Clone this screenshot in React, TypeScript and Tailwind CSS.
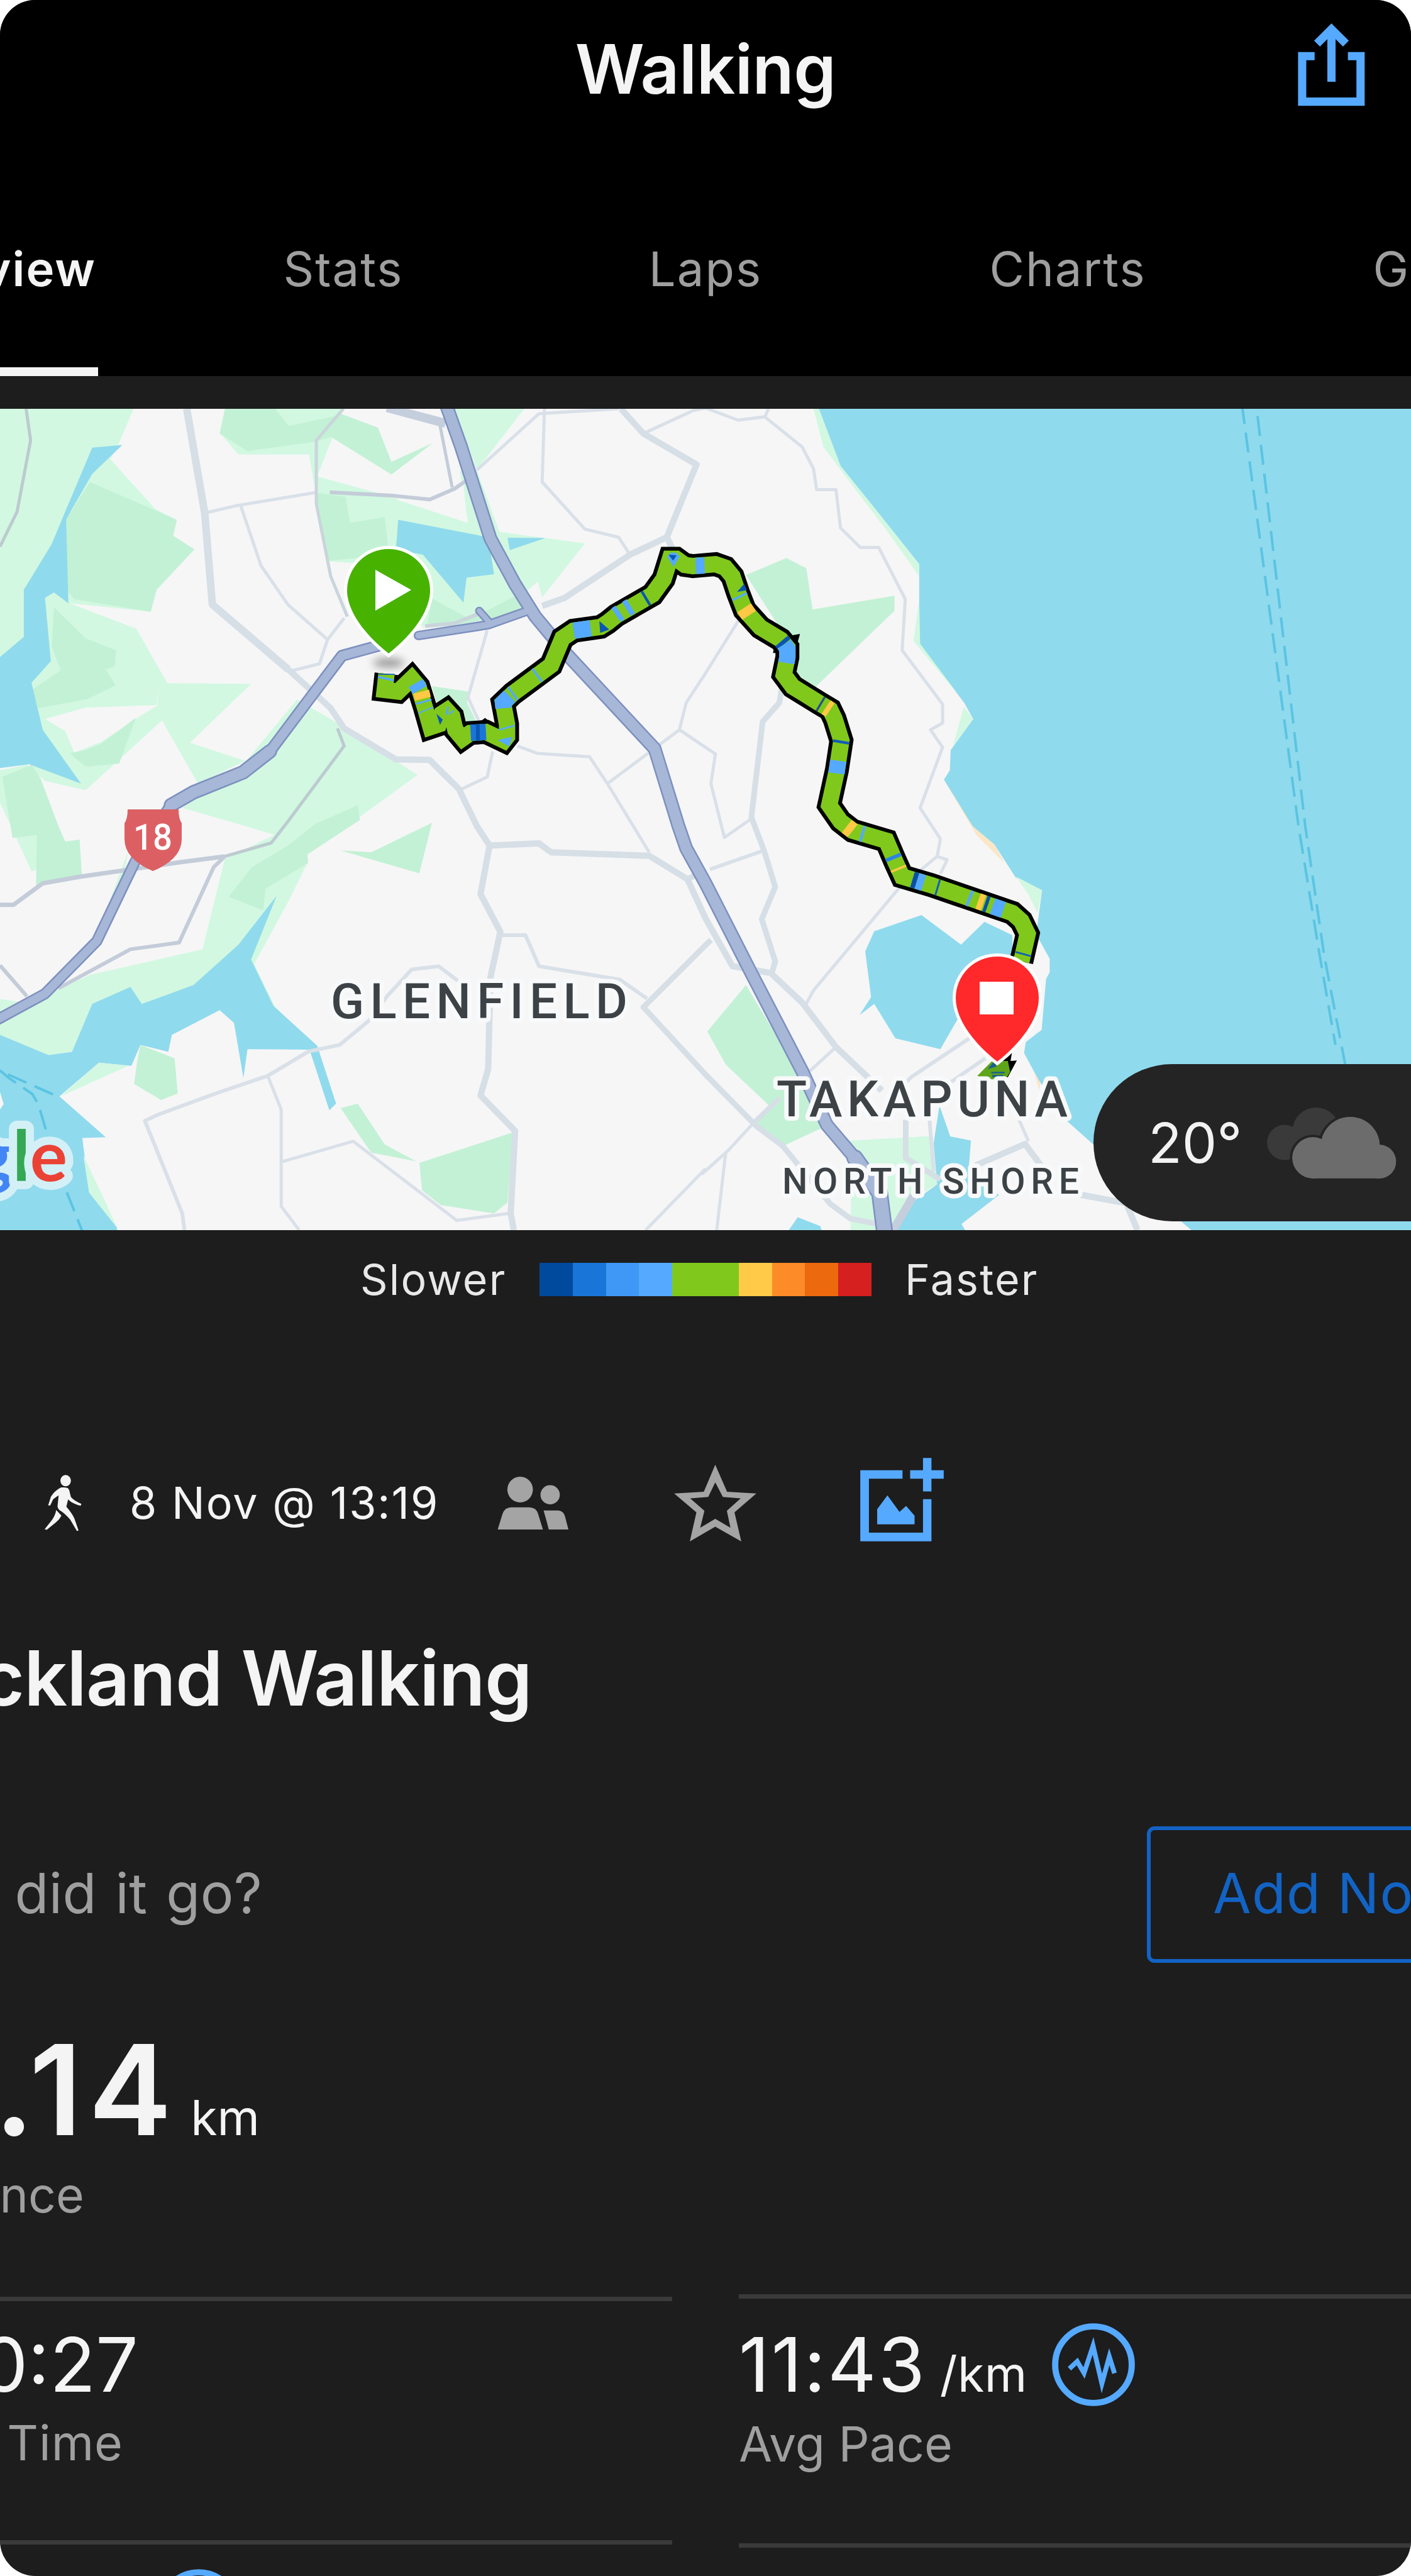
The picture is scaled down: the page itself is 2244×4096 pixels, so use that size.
import { useState } from "react"

interface Shape {
  d: string
  color: string
}

interface Road {
  points: string
  color: string
  width: number
}

const LAND = "#f6f6f7"
const PARK = "#d2f8e1"
const FOREST = "#c3f1d5"
const WATER = "#90daed"
const BEACH = "#fbe6c6"

const tabs = ["Overview", "Stats", "Laps", "Charts", "Gear"]

const paceColors = [
  "bg-[#004a9e]",
  "bg-[#1976d8]",
  "bg-[#3f98f5]",
  "bg-[#55a9ff]",
  "bg-[#80c91c]",
  "bg-[#80c91c]",
  "bg-[#ffca48]",
  "bg-[#fd8b27]",
  "bg-[#ec690e]",
  "bg-[#d61f1f]",
]

const shapes: Shape[] = [
  // parks and reserves
  { color: PARK, d: "0,18 297,18 262,155 245,205 345,390 392,430 385,490 432,540 348,690 335,772 280,762 303,835 210,805 155,740 100,860 0,1000" },
  { color: PARK, d: "100,720 120,700 155,740 210,805 303,835 372,1037 558,1040 422,1258 545,1325 440,1410 360,1175 190,1435 100,1400 60,1340 0,1360 0,1480 70,1735 150,1700 60,1300 60,1035 100,860" },
  { color: LAND, d: "155,740 280,762 303,835" },
  { color: LAND, d: "100,1170 190,1128 348,1118 352,1060 350,1120 303,1168 225,1255 165,1295 145,1215" },
  { color: LAND, d: "100,1400 190,1435 270,1340 290,1500 275,1740 182,1750 177,1618 145,1625 125,1500" },
  { color: FOREST, d: "200,290 393,430 385,490 432,540 348,690 335,772 165,725 147,690 147,430 165,380" },
  { color: FOREST, d: "120,755 190,870 258,915 255,975 235,985 257,1045 195,1095 85,1130 72,1060 135,990 115,900" },
  { color: FOREST, d: "155,1297 190,1285 225,1262 302,1165 265,1335 190,1347" },
  { color: FOREST, d: "5,1385 70,1340 90,1390 130,1568 145,1625 177,1618 182,1750 80,1795 82,1600 28,1612" },
  { color: PARK, d: "490,110 530,188 687,188 698,300 740,120 690,60" },
  { color: FOREST, d: "500,18 615,18 760,38 840,88 870,215 962,145 870,262 735,122 700,140 550,175 488,110" },
  { color: PARK, d: "612,18 768,18 745,45 642,82" },
  { color: PARK, d: "703,268 870,345 1040,442 1022,250 1060,245 1165,18 1010,18 1110,475 1300,518 1205,718 1195,660 1160,710 1165,775 1010,815 940,830 860,600 725,583" },
  { color: LAND, d: "880,355 955,358 1000,320 1030,290 1038,440" },
  { color: FOREST, d: "703,330 768,345 778,442 855,420 865,560 725,583" },
  { color: FOREST, d: "960,722 1045,800 1160,700 1170,770 1085,800 1000,825 950,815" },
  { color: FOREST, d: "960,1048 1040,1068 1038,1110 1062,1190 1020,1205 970,1110" },
  { color: PARK, d: "660,1098 745,1180 928,1378 790,1545 683,1673 683,1705 640,1850 565,2080 610,2235 700,2385 430,2160 320,2225 160,2405 108,2420 0,2345 0,2210 60,2225 200,2120 450,2025 495,1720 500,1690 610,1600 540,1565 405,1500 545,1330" },
  { color: PARK, d: "285,1660 245,1840 270,1800" },
  { color: FOREST, d: "795,1490 800,1545 683,1673 685,1705 590,1800 585,1880 508,1830 560,1720 640,1640 700,1560" },
  { color: FOREST, d: "960,1555 932,1743 757,1658 825,1665" },
  // inlets
  { color: WATER, d: "205,162 272,152 205,260 160,390 147,430 152,740 120,700 100,720 113,955 70,1035 95,1210 180,1410 65,1338 0,1352 0,940 53,865 53,690 115,520 145,400" },
  { color: WATER, d: "885,430 1085,495 1098,632 1037,645 1030,738 940,560 880,540" },
  { color: WATER, d: "1128,497 1212,498 1133,543" },
  { color: WATER, d: "615,1826 558,2063 608,2236 705,2383 747,2598 732,2623 688,2398 550,2396 541,2503 520,2298 488,2251 382,2343 374,2406 312,2380 292,2458 220,2446 132,2571 235,2723 183,2726 198,2928 260,3058 260,3070 0,3070 0,2343 108,2418 160,2406 205,2228 290,2165 315,2228 430,2158 530,2008" },
  { color: LAND, d: "0,2555 8,2600 0,2620" },
  { color: PARK, d: "220,2446 285,2458 135,2571" },
  { color: PARK, d: "185,2790 198,2928 260,3058 225,2930" },
  { color: FOREST, d: "312,2380 388,2430 395,2560 358,2585 298,2525 305,2440" },
  { color: FOREST, d: "757,2615 795,2598 855,2750 925,2812 825,2780" },
  { color: FOREST, d: "932,2818 1140,2705 1128,2965 1098,3006 980,2975 938,2920" },
  // gulf and east coast
  { color: WATER, d: "1820,18 1868,230 1943,385 2043,595 2043,890 2143,1110 2163,1170 2113,1285 2111,1360 2098,1395 2160,1568 2210,1636 2258,1760 2316,1806 2303,1970 2333,2060 2333,2110 2325,2135 2315,2325 2304,2338 2280,2370 2276,2410 2308,2510 2373,2665 2430,2750 2600,3000 2648,3068 3136,3068 3136,18" },
  { color: PARK, d: "1808,18 1820,18 1868,230 1943,385 2043,595 2043,640 1975,480 1830,160" },
  { color: PARK, d: "2043,725 2045,890 2130,1080 2030,880" },
  { color: PARK, d: "2142,1125 2163,1170 2118,1270" },
  { color: PARK, d: "2258,1755 2316,1806 2306,1890 2285,1820" },
  { color: BEACH, d: "2098,1395 2162,1568 2210,1636 2232,1705 2170,1600" },
  { color: BEACH, d: "2298,2480 2312,2520 2310,2550" },
  { color: FOREST, d: "1658,635 1748,572 1792,610 1806,763 1988,712 1988,768 1813,1050 1748,990 1740,850" },
  { color: FOREST, d: "1658,2158 1572,2330 1613,2453 1708,2603 1680,2673 1740,2756 1825,2690 1830,2640" },
  { color: PARK, d: "1888,2736 2073,2718 2083,2898 2033,2948 1993,3068 1890,3068 1893,2868 1908,2808" },
  { color: WATER, d: "1943,1958 2048,1898 2136,2008 2188,1923 2250,1973 2250,2050 2200,2200 2130,2280 2090,2396 1990,2356 1943,2228 1910,2270 1936,2203 1923,2033" },
  { color: WATER, d: "2088,2605 2112,2720 2158,2735 2153,2840 2220,2938 2137,3045 2145,3068 1993,3068 2033,2958 2083,2898 2075,2745" },
  { color: WATER, d: "1773,3020 1823,3053 1826,3068 1753,3068" },
]

const major = "#d6dfe6"
const minor = "#d9e0e8"
const shade = "#c3ccd8"

const roads: Road[] = [
  { color: minor, width: 5, points: "455,405 525,378 705,328" },
  { color: minor, width: 5, points: "535,378 580,600 640,745 728,875 710,965 650,990" },
  { color: minor, width: 5, points: "728,875 765,795" },
  { color: minor, width: 5, points: "1060,245 1198,36 1375,18" },
  { color: minor, width: 5, points: "1210,18 1205,290 1300,465 1375,495 1398,555" },
  { color: minor, width: 5, points: "1430,110 1540,25 1568,15 1640,60 1700,48 1708,18" },
  { color: minor, width: 5, points: "1700,48 1783,160 1808,240 1815,318 1858,318 1868,460 1912,533 1953,533 2012,725 2005,915 2095,1115 2095,1185 2068,1210 2095,1275 2045,1500 2090,1615 2083,1680 2105,1693 2090,1745" },
  { color: minor, width: 5, points: "2083,1680 1998,1798 1808,2178 1790,2233" },
  { color: minor, width: 5, points: "1643,800 1568,1000 1525,1110 1510,1210 1590,1300 1580,1410 1610,1610 1670,1540" },
  { color: minor, width: 5, points: "1510,1210 1350,1410" },
  { color: minor, width: 5, points: "1083,840 1040,1090 1065,1180" },
  { color: minor, width: 5, points: "1150,1270 1195,1298 1310,1310 1350,1410 1443,1665" },
  { color: minor, width: 5, points: "1095,1290 1083,1385 1020,1435" },
  { color: minor, width: 6, points: "1112,1973 1168,1973 1198,2088 1378,2138 1438,2208" },
  { color: minor, width: 6, points: "1020,2145 975,2088 915,2100 860,2200 820,2290 755,2380 685,2405 595,2495 480,2560 350,2640 322,2662 405,3005 410,3068" },
  { color: minor, width: 5, points: "595,2495 625,2620 625,2980 665,3068" },
  { color: minor, width: 5, points: "628,2813 785,2738 1015,3032 1135,3005" },
  { color: minor, width: 5, points: "1568,2840 1435,3068" },
  { color: minor, width: 6, points: "1578,1728 1698,1658" },
  { color: minor, width: 5, points: "1858,2388 1780,2508" },
  { color: minor, width: 6, points: "2155,2355 2025,2500 1990,2560" },
  { color: minor, width: 6, points: "2190,2430 2090,2545" },
  { color: minor, width: 5, points: "2258,2633 2286,2738" },
  { color: minor, width: 5, points: "1560,2860 1618,2773 1673,2673" },
  { color: minor, width: 5, points: "1613,2778 1593,3068" },
  { color: minor, width: 6, points: "2065,2640 2075,2850" },
  { color: major, width: 12, points: "415,18 455,405 472,745 640,985" },
  { color: major, width: 10, points: "640,985 735,1130 765,1205 880,1320 955,1322 1020,1430 1060,1568 1088,1640 1068,1820 1112,1960 1090,2130 1085,2470 1068,2568 1145,2700 1135,3005 1142,3068" },
  { color: major, width: 10, points: "1088,1640 1198,1632 1225,1665 1443,1678 1528,1765 1568,1910 1628,2088 1713,2113 1783,2223 1858,2388 1960,2550" },
  { color: major, width: 9, points: "1528,1765 1568,1730" },
  { color: major, width: 9, points: "1716,2110 1723,2070 1693,1913 1723,1793 1698,1658 1670,1535 1695,1180 1732,1110 1738,1050" },
  { color: major, width: 10, points: "1380,18 1430,110 1548,225 1482,495 1400,560 1255,720 1205,750" },
  { color: major, width: 10, points: "1482,495 1497,545" },
  { color: major, width: 9, points: "1580,1990 1430,2240 1568,2490 1680,2680 1740,2756 1845,2970 1890,3025 1950,3045" },
  { color: major, width: 8, points: "1673,2673 1733,2578" },
  { color: major, width: 10, points: "2168,2828 2278,2748 2318,2838" },
  { color: major, width: 10, points: "2400,2936 2503,2968 2528,3068" },
  { color: major, width: 9, points: "2013,2658 2013,2800 2090,2880" },
  { color: "#bccbd0", width: 5, points: "58,18 68,135 38,400 0,530" },
  { color: "#c9d5db", width: 5, points: "763,18 703,135 703,370 735,640 772,790" },
  { color: shade, width: 6, points: "733,328 870,340 955,355 1010,315 1045,275" },
  { color: shade, width: 5, points: "978,80 1005,310" },
  { color: "#c5cedd", width: 14, points: "860,14 990,72" },
  { color: "#c9d5db", width: 6, points: "945,825 1010,815 1070,775" },
  { color: "#bccbd0", width: 5, points: "750,1205 765,1270 640,1550 603,1630 500,1680" },
  { color: shade, width: 7, points: "500,1680 400,1702 180,1755 95,1780 30,1860 0,1860" },
  { color: shade, width: 6, points: "500,1680 475,1720 398,2000 290,2025 130,2170" },
  { color: shade, width: 6, points: "0,2085 60,2200" },
  { color: "#c5cedd", width: 13, points: "2030,2940 1985,3068" },
]

const motorways = [
  { width: 13, points: "1065,768 1090,815" },
  { width: 15, points: "1170,770 1085,820 930,860" },
  { width: 19, points: "880,880 760,935 690,1090 600,1290 540,1365" },
  { width: 23, points: "600,1290 540,1368 430,1442 380,1490" },
  { width: 18, points: "430,1440 375,1500 300,1700 215,1995 100,2190 -10,2290" },
  { width: 22, points: "993,10 1025,160 1090,500 1145,670 1190,790 1260,930 1455,1280 1508,1568 1525,1650 1568,1780 1668,2108 1783,2478 1838,2678 1900,2800 1955,2930 1966,3075" },
  { width: 27, points: "1900,2800 1955,2930 1966,3075" },
]

const route =
  "859,1002 855,1062 885,1068 915,1020 930,1050 945,1130 957,1200 975,1190 982,1150 993,1138 1005,1160 1012,1210 1028,1242 1045,1222 1080,1218 1120,1250 1127,1235 1127,1190 1118,1110 1140,1075 1225,970 1250,870 1275,842 1335,828 1350,812 1370,785 1450,708 1475,650 1489,575 1503,575 1522,598 1540,602 1590,595 1612,608 1628,640 1640,700 1655,765 1690,830 1735,875 1750,905 1750,940 1742,1005 1762,1050 1820,1110 1845,1135 1855,1170 1870,1250 1860,1360 1843,1490 1868,1550 1895,1585 1970,1622 1990,1700 2005,1755 2070,1787 2250,1890 2270,1920 2284,1968 2270,2070"

const paceSegments: Shape[] = [
  { color: "#1260c0", d: "859,1002 859,1006" },
  { color: "#55a9ff", d: "858,1016 857,1024" },
  { color: "#55a9ff", d: "924,1036 933,1062" },
  { color: "#ffc845", d: "936,1068 940,1095" },
  { color: "#55a9ff", d: "941,1103 942,1109" },
  { color: "#55a9ff", d: "946,1135 947,1139" },
  { color: "#1b74d8", d: "1046,1221 1080,1218" },
  { color: "#0a56b0", d: "1058,1220 1066,1220" },
  { color: "#55a9ff", d: "1127,1205 1126,1199" },
  { color: "#55a9ff", d: "1119,1130 1118,1110 1133,1085" },
  { color: "#55a9ff", d: "1138,1078 1142,1073" },
  { color: "#55a9ff", d: "1192,1010 1196,1005" },
  { color: "#55a9ff", d: "1275,842 1313,833" },
  { color: "#55a9ff", d: "1369,784 1378,774" },
  { color: "#55a9ff", d: "1392,761 1402,751" },
  { color: "#0a56b0", d: "1433,724 1438,719" },
  { color: "#55a9ff", d: "1546,601 1566,600" },
  { color: "#55a9ff", d: "1643,712 1645,719" },
  { color: "#ffc845", d: "1654,757 1665,785" },
  { color: "#0a56b0", d: "1737,880 1743,892" },
  { color: "#55a9ff", d: "1743,892 1750,910 1750,940 1748,962" },
  { color: "#28508a", d: "1822,1112 1826,1116" },
  { color: "#ffc845", d: "1836,1126 1845,1136" },
  { color: "#0f5cb8", d: "1870,1250 1869,1260" },
  { color: "#55a9ff", d: "1863,1325 1859,1372" },
  { color: "#ffc845", d: "1882,1568 1895,1585" },
  { color: "#55a9ff", d: "1914,1595 1920,1598" },
  { color: "#2b83e6", d: "1984,1678 1987,1690" },
  { color: "#ffc845", d: "1996,1722 1998,1730" },
  { color: "#0a4fa5", d: "2028,1766 2038,1771" },
  { color: "#55a9ff", d: "2038,1771 2053,1779" },
  { color: "#0f5cb8", d: "2082,1794 2086,1796" },
  { color: "#55a9ff", d: "2152,1834 2158,1838" },
  { color: "#ffc845", d: "2174,1846 2186,1853" },
  { color: "#0a4fa5", d: "2189,1855 2196,1859" },
  { color: "#55a9ff", d: "2206,1865 2230,1879" },
  { color: "#0f5cb8", d: "2275,2040 2274,2046" },
]

function RouteMap() {
  return (
    <div className="relative h-[1306px] w-full overflow-hidden bg-[#f6f6f7]">
      <svg className="block h-full w-full" viewBox="0 18 3136 3050" preserveAspectRatio="none" fill="none">
        {shapes.map((s, i) => (
          <polygon key={i} points={s.d} fill={s.color} />
        ))}
        <g stroke="#5ac4e2" strokeWidth="4" strokeDasharray="32 14">
          <polyline vectorEffect="non-scaling-stroke" points="2760,0 2886,1568 2933,2048 2968,2380" />
          <polyline vectorEffect="non-scaling-stroke" points="2795,45 2901,1568 2943,2048 2990,2455" />
          <polyline vectorEffect="non-scaling-stroke" points="0,2475 20,2503 72,2563 85,2600 130,2850 182,3068" />
          <polyline vectorEffect="non-scaling-stroke" points="18,2490 130,2573" />
        </g>
        {roads.map((r, i) => (
          <polyline
            key={i}
            points={r.points}
            stroke={r.color}
            strokeWidth={r.width}
            strokeLinejoin="round"
            vectorEffect="non-scaling-stroke"
          />
        ))}
        {motorways.map((m) => (
          <polyline key={m.points} points={m.points} stroke="#7d90bf" strokeWidth={m.width} strokeLinejoin="round" strokeLinecap="round" vectorEffect="non-scaling-stroke" />
        ))}
        {motorways.map((m) => (
          <polyline key={m.points} points={m.points} stroke="#a7b7d7" strokeWidth={m.width - 5} strokeLinejoin="round" strokeLinecap="round" vectorEffect="non-scaling-stroke" />
        ))}

        <polyline points={route} stroke="#000" strokeWidth="38" strokeLinejoin="miter" strokeMiterlimit="1.5" vectorEffect="non-scaling-stroke" />
        <path fill="#000" d="M1055 1195L1078 1166L1100 1195ZM1750 862L1778 854L1772 890ZM1718 925L1722 890L1740 925Z" />
        <polyline points={route} stroke="#80c91c" strokeWidth="26" strokeLinejoin="miter" strokeMiterlimit="1.5" vectorEffect="non-scaling-stroke" />
        {paceSegments.map((s) => (
          <polyline key={s.d} points={s.d} stroke={s.color} strokeWidth="26" vectorEffect="non-scaling-stroke" />
        ))}
        <path fill="#55a9ff" d="M1483 568L1490 552H1502L1511 566L1497 605ZM1106 1248L1138 1236L1132 1272Z" />
        <path fill="#0a56b0" d="M1486 560L1504 562L1496 582ZM1332 806L1354 838L1334 850ZM1654 668L1660 692L1638 698ZM970 1150L984 1172L978 1192Z" />
        <path fill="#55a9ff" d="M990 1156L994 1124L998 1124L995 1152ZM998 1148L1008 1136L1010 1140L998 1156Z" />
        <path fill="#000" d="M2250 2400L2246 2440L2260 2438L2240 2500L2230 2505L2225 2430Z" />
        <path fill="#5fa519" d="M2172 2495L2205 2440L2240 2440L2245 2480L2236 2506L2205 2508Z" />
        <path fill="#1b5f8f" d="M2195 2470L2210 2440L2215 2460ZM2203 2480h30v6h-30zM2205 2492h25v8h-25z" />
      </svg>

      <svg className="absolute inset-0 h-full w-full" viewBox="0 650 2244 1306">
        <defs>
          <filter id="soft" x="-50%" y="-150%" width="200%" height="400%">
            <feGaussianBlur stdDeviation="7" />
          </filter>
        </defs>
        <path d="M203 1287H284Q284 1302 289 1309V1334Q289 1366 243 1385Q198 1366 198 1334V1309Q203 1302 203 1287Z" fill="#dc6063" />
        <text x="212" y="1351" textLength="62" lengthAdjust="spacingAndGlyphs" fontSize="58" fontWeight="500" fontFamily="Roboto, sans-serif" fill="#fff">
          18
        </text>

        <ellipse cx="618" cy="1054" rx="25" ry="7" fill="#000" opacity="0.4" filter="url(#soft)" />
        <path d="M552 939A66 66 0 0 1 684 939C684 972 655 1010 618 1039C581 1010 552 972 552 939Z" fill="#47b200" stroke="#fff" strokeWidth="10" paintOrder="stroke" />
        <path d="M597 906L654 938L597 971Z" fill="#fff" />

        <path d="M1520 1587A66 66 0 0 1 1652 1587C1652 1621 1623 1659 1586 1688C1549 1659 1520 1621 1520 1587Z" fill="#ff282b" stroke="#fff" strokeWidth="10" paintOrder="stroke" />
        <rect x="1558" y="1561" width="54" height="52" fill="#fff" />

        <g fontFamily="Roboto, sans-serif" fontWeight="500" fill="#3c4245" stroke="#f8f9fa" strokeWidth="14" strokeLinejoin="round" paintOrder="stroke">
          <text x="526" y="1619" fontSize="78" textLength="472">GLENFIELD</text>
          <text x="1235" y="1775" fontSize="79" textLength="463">TAKAPUNA</text>
          <text x="1244" y="1898" fontSize="57" textLength="472">NORTH SHORE</text>
        </g>

        <text x="107" y="1878" fontSize="111" textAnchor="end" fontFamily="Lato, sans-serif" fontWeight="700" stroke="#d3f0f7" strokeWidth="26" strokeLinejoin="round" paintOrder="stroke">
          <tspan fill="#4285f4">G</tspan>
          <tspan fill="#ea4335">o</tspan>
          <tspan fill="#fbbc05">o</tspan>
          <tspan fill="#4285f4">g</tspan>
          <tspan fill="#34a853">l</tspan>
          <tspan fill="#ea4335">e</tspan>
        </text>
      </svg>

      <div className="absolute top-[1042px] left-[1739px] flex h-[250px] w-[700px] items-center rounded-l-full bg-[#242424] pl-[87px]">
        <span className="text-[88px] leading-none text-[#f2f2f2]">20°</span>
        <svg className="absolute top-[69px] left-[276px] h-[113px] w-[206px]" viewBox="0 0 206 113">
          <g fill="#3a3a3a">
            <circle cx="78" cy="37.5" r="37.5" />
            <circle cx="28" cy="55.6" r="28" />
          </g>
          <g fill="#6c6c6c" stroke="#242424" strokeWidth="8" paintOrder="stroke">
            <circle cx="132.4" cy="62" r="47" />
            <circle cx="73" cy="80" r="32.7" />
            <circle cx="178.5" cy="86" r="26.7" />
          </g>
          <g fill="#6c6c6c">
            <circle cx="132.4" cy="62" r="47" />
            <circle cx="73" cy="80" r="32.7" />
            <path d="M73 70H178V112.7H73Z" />
            <circle cx="178.5" cy="86" r="26.7" />
          </g>
        </svg>
      </div>
    </div>
  )
}

function ShareIcon() {
  return (
    <svg className="h-[134px] w-[107px]" viewBox="98 50 334 420" fill="none" stroke="#55a9ff" strokeWidth="41">
      <path d="M181 220H119V447H410V220H347" />
      <path d="M265 348V90" />
      <path d="M193 158L265 86L337 158" />
    </svg>
  )
}

function WalkIcon() {
  return (
    <svg className="h-[90px] w-[59px]" viewBox="42 140 106 280" preserveAspectRatio="none" fill="#f4f4f4">
      <ellipse cx="102" cy="169" rx="15" ry="28" />
      <path d="M88 203Q96 200 108 205L112 215L117 250Q125 268 147 284L145 293Q122 284 109 262L104 298Q120 330 127 356L139 416L134 418L115 362Q100 330 84 314Q78 305 79 292L82 242Q70 255 66 262L58 292L52 292L60 248Q70 220 88 203Z" />
      <path d="M75 314L90 342Q84 362 74 376L48 412L42 409L60 370Q72 345 75 314Z" />
    </svg>
  )
}

function PeopleIcon() {
  return (
    <svg className="h-[84px] w-[113px]" viewBox="1350 155 206 263" preserveAspectRatio="none" fill="#a4a4a4">
      <ellipse cx="1416" cy="219" rx="37" ry="64" />
      <ellipse cx="1503" cy="245" rx="28" ry="48" />
      <path d="M1351 418L1365 340Q1372 308 1390 308H1442Q1462 308 1468 340L1482 418Z" />
      <path d="M1484 323H1526Q1542 325 1546 352L1556 418H1499Q1492 370 1484 323Z" />
    </svg>
  )
}

function StarIcon() {
  return (
    <svg className="h-[122px] w-[131px]" viewBox="52 92 410 383" fill="#a4a4a4" fillRule="evenodd">
      <path d="M257 92L316 227L462 236L353 330L387 475L257 401L130 475L163 330L52 236L200 227ZM257 180L222 253L132 260L203 322L182 407L257 362L333 407L315 322L384 260L295 253Z" />
    </svg>
  )
}

function AddPhotoIcon() {
  return (
    <svg className="h-[133px] w-[133px]" viewBox="978 52 415 416" fill="#55a9ff">
      <path d="M978 114H1188V156H1021V424H1290V258H1332V467H978Z" />
      <path d="M1290 53H1332V114H1393V156H1332V219H1290V156H1226V114H1290Z" />
      <path d="M1062 308L1113 239L1173 321L1206 291L1248 340V383H1062Z" />
    </svg>
  )
}

function PulseIcon() {
  return (
    <svg className="h-[132px] w-[132px] shrink-0" viewBox="75 65 414 414" fill="none" stroke="#55a9ff">
      <circle cx="282" cy="272" r="191" strokeWidth="31" />
      <path d="M162 292L201 256L235 314L280 178L324 366L361 232L387 315" strokeWidth="24" strokeMiterlimit="8" />
    </svg>
  )
}

export default function App() {
  const [active, setActive] = useState("Overview")

  return (
    <div className="h-[4096px] w-[2244px] overflow-hidden bg-white">
      <div className="flex h-full w-full flex-col overflow-hidden rounded-[56px] bg-[#1d1d1d] font-['Inter',sans-serif] whitespace-nowrap text-[#f4f4f4]">
        <header className="h-[598px] shrink-0 bg-black">
          <div className="flex h-[220px] items-center justify-between px-[73px]">
            <div className="w-[107px]" />
            <h1 className="text-[108px] leading-none font-semibold tracking-[-0.5px]">Walking</h1>
            <div className="pb-[16px]">
              <ShareIcon />
            </div>
          </div>
          <nav className="-ml-[318px] flex h-[378px]">
            {tabs.map((tab) => (
              <button
                key={tab}
                onClick={() => setActive(tab)}
                className={`flex w-[576px] shrink-0 flex-col items-center text-[76px] leading-none tracking-[2px] ${
                  active === tab ? "font-semibold text-[#f4f4f4]" : "text-[#9f9f9f]"
                }`}
              >
                <span className="flex flex-1 items-center pt-[49px]">{tab}</span>
                <span className={`h-[14px] w-[372px] ${active === tab ? "bg-[#f4f4f4]" : ""}`} />
              </button>
            ))}
          </nav>
        </header>

        <main className="pt-[52px]">
          <RouteMap />

          <div className="flex h-[158px] items-center pb-[2px] pl-[573px] text-[68px] leading-none tracking-[2.2px] text-[#e8e8e8]">
            <span className="w-[285px]">Slower</span>
            <div className="flex h-[53px] w-[528px]">
              {paceColors.map((c, i) => (
                <div key={i} className={`flex-1 ${c}`} />
              ))}
            </div>
            <span className="ml-[53px]">Faster</span>
          </div>

          <div className="mt-[175px] flex h-[201px] items-center pl-[71px]">
            <WalkIcon />
            <span className="ml-[76px] w-[585px] text-[70px] leading-none tracking-[2px]">8 Nov @ 13:19</span>
            <PeopleIcon />
            <div className="ml-[168px]">
              <StarIcon />
            </div>
            <div className="ml-[165px] pb-[10px]">
              <AddPhotoIcon />
            </div>
          </div>

          <div className="mt-[79px] flex h-[202px] w-[846px] items-center justify-end pb-[4px]">
            <h2 className="text-[121px] leading-none font-semibold tracking-[-0.8px]">Auckland Walking</h2>
          </div>

          <div className="mt-[133px] flex h-[217px] justify-between">
            <div className="flex w-[417px] items-center justify-end pb-[5px] text-[88px] leading-none tracking-[0.3px] text-[#9f9f9f] [word-spacing:5px]">
              How did it go?
            </div>
            <button className="-mr-[180px] flex w-[600px] items-center rounded-[12px] border-[6px] border-[#1263c4] pb-[5px] pl-[99px] text-[88px] leading-none tracking-[1.2px] text-[#1263c4]">
              Add Notes
            </button>
          </div>

          <div className="mt-[82px] flex h-[240px] w-[413px] justify-end text-[199px] leading-[240px] font-semibold tracking-[10px]">
            <div>
              5.14<span className="ml-[20px] text-[77px] leading-none font-normal tracking-normal">km</span>
            </div>
          </div>
          <div className="flex h-[95px] w-[134px] items-center justify-end text-[77px] leading-none text-[#9f9f9f]">Distance</div>

          <div className="flex gap-[106px]">
            <div className="flex w-[1069px] flex-col pt-[114px]">
              <div className="h-[7px] bg-[#3a3a3a]" />
              <div className="flex h-[202px] w-[220px] items-center justify-end text-[120px] leading-none">1:00:27</div>
              <div className="flex h-[46px] w-[196px] items-center justify-end text-[77px] leading-none tracking-[1px] text-[#9f9f9f]">Total Time</div>
              <div className="mt-[132px] h-[7px] bg-[#3a3a3a]" />
              <div className="mt-[39px] ml-[250px]">
                <PulseIcon />
              </div>
            </div>
            <div className="flex w-[1069px] flex-col pt-[110px]">
              <div className="h-[7px] bg-[#3a3a3a]" />
              <div className="flex h-[210px] items-center">
                <div className="w-[498px] text-[120px] leading-none tracking-[3px]">
                  11:43<span className="ml-[21px] text-[77px] tracking-[0.5px]">/km</span>
                </div>
                <PulseIcon />
              </div>
              <div className="flex h-[42px] items-center text-[77px] leading-none text-[#9f9f9f]">Avg Pace</div>
              <div className="mt-[137px] h-[7px] bg-[#3a3a3a]" />
            </div>
          </div>
        </main>
      </div>
    </div>
  )
}
